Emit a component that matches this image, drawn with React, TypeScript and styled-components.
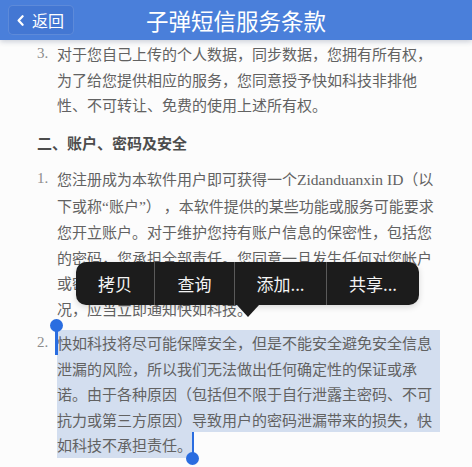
import React from "react";
import styled, { createGlobalStyle } from "styled-components";

const GlobalStyle = createGlobalStyle`
  html, body {
    margin: 0;
    padding: 0;
    background: #fcfcfc;
  }
  body {
    font-family: "Noto Sans CJK SC", "Noto Sans", sans-serif;
  }
`;

const Page = styled.div`
  position: relative;
  width: 472px;
  height: 467px;
  overflow: hidden;
  background: #fcfcfc;
`;

const Header = styled.header`
  position: relative;
  z-index: 3;
  height: 40px;
  padding: 0 8px;
  display: grid;
  grid-template-columns: 1fr auto 1fr;
  align-items: center;
  background: #4a7fda;
  box-shadow: 0 2px 5px rgba(40, 60, 100, 0.22);
`;

const BackButton = styled.button`
  justify-self: start;
  height: 30px;
  padding: 0 9px 0 8px;
  display: flex;
  align-items: center;
  gap: 8px;
  border: 1px solid rgba(255, 255, 255, 0.14);
  border-radius: 5px;
  background: #4377d3;
  color: #fff;
  font-family: inherit;
  font-size: 16px;
  line-height: 1;
  cursor: pointer;
`;

const Title = styled.h1`
  margin: 0;
  color: #fff;
  font-size: 22.5px;
  font-weight: 400;
  line-height: 40px;
  white-space: nowrap;
`;

const Content = styled.main`
  padding: 1px 32px 0 37px;
`;

const Item = styled.section`
  display: grid;
  grid-template-columns: 20px 1fr;
  & + & {
    margin-top: 9px;
  }
`;

const Num = styled.span`
  font-family: "Liberation Serif", serif;
  font-size: 15px;
  line-height: 25.5px;
  color: #8c8c8c;
`;

const Lines = styled.div`
  display: flex;
  flex-direction: column;
  align-items: stretch;
`;

const Line = styled.span<{ $selected?: boolean; $fit?: boolean }>`
  position: relative;
  display: block;
  align-self: ${(p) => (p.$fit ? "flex-start" : "stretch")};
  white-space: nowrap;
  font-size: 15px;
  line-height: 25.5px;
  color: #626262;
  background: ${(p) => (p.$selected ? "#d3deef" : "transparent")};
`;

const Latin = styled.span`
  font-family: "Liberation Serif", serif;
  font-size: 15.5px;
`;

const Heading = styled.h2`
  margin: 12px 0 11px;
  font-size: 15px;
  font-weight: 600;
  line-height: 25.5px;
  color: #4c4c4c;
  white-space: nowrap;
`;

/* Selection handles: a thin caret with a round knob */
const Handle = styled.span<{ $end?: boolean }>`
  position: absolute;
  top: 0;
  ${(p) => (p.$end ? "right: -2px;" : "left: -2px;")}
  width: 2.5px;
  height: ${(p) => (p.$end ? "24px" : "25px")};
  background: #2a6de0;
  &::after {
    content: "";
    position: absolute;
    left: -5.5px;
    ${(p) => (p.$end ? "bottom: -9px;" : "top: -11px;")}
    width: 13px;
    height: 13px;
    border-radius: 50%;
    background: #2a6de0;
  }
`;

/* Edit menu floating over the text */
const Menu = styled.div`
  position: absolute;
  z-index: 4;
  top: 262px;
  left: 76px;
  display: flex;
  height: 43px;
  border-radius: 10px;
  background: #1c1c1c;
  box-shadow: 0 2px 6px rgba(0, 0, 0, 0.15);
  &::after {
    content: "";
    position: absolute;
    top: 43px;
    left: 161px;
    border-left: 11px solid transparent;
    border-right: 11px solid transparent;
    border-top: 12px solid #1c1c1c;
  }
`;

const MenuItem = styled.button<{ $w: number }>`
  width: ${(p) => p.$w}px;
  display: flex;
  align-items: center;
  justify-content: center;
  padding: 0;
  border: none;
  background: transparent;
  color: #f4f4f4;
  font-family: inherit;
  font-size: 17px;
  white-space: nowrap;
  & + & {
    border-left: 1px solid #5a5a5a;
  }
`;

const Chevron = () => (
  <svg width="7" height="11" viewBox="0 0 7 11" aria-hidden="true">
    <path d="M5.6 1.2 1.6 5.5l4 4.3" fill="none" stroke="#fff" strokeWidth="2.2" strokeLinecap="round" strokeLinejoin="round" />
  </svg>
);

const menuItems = [
  { label: "拷贝", w: 78 },
  { label: "查询", w: 80 },
  { label: "添加...", w: 92 },
  { label: "共享...", w: 93 },
];

export default function App() {
  return (
    <Page>
      <GlobalStyle />
      <Header>
        <BackButton>
          <Chevron />
          返回
        </BackButton>
        <Title>子弹短信服务条款</Title>
      </Header>

      <Content>
        <Item>
          <Num>3.</Num>
          <Lines>
            <Line>对于您自己上传的个人数据，同步数据，您拥有所有权，</Line>
            <Line>为了给您提供相应的服务，您同意授予快如科技非排他</Line>
            <Line>性、不可转让、免费的使用上述所有权。</Line>
          </Lines>
        </Item>

        <Heading>二、账户、密码及安全</Heading>

        <Item>
          <Num>1.</Num>
          <Lines>
            <Line>
              您注册成为本软件用户即可获得一个<Latin>Zidanduanxin ID</Latin>（以
            </Line>
            <Line>
              下或称<Latin>“</Latin>账户<Latin>”</Latin>）&thinsp;，本软件提供的某些功能或服务可能要求
            </Line>
            <Line>您开立账户。对于维护您持有账户信息的保密性，包括您</Line>
            <Line>的密码，您承担全部责任。您同意一旦发生任何对您帐户</Line>
            <Line>或密码的任何未经授权使用或其他安全漏洞的情</Line>
            <Line>况，应当立即通知快如科技。</Line>
          </Lines>
        </Item>

        <Item>
          <Num>2.</Num>
          <Lines>
            <Line $selected>
              <Handle />
              快如科技将尽可能保障安全，但是不能安全避免安全信息
            </Line>
            <Line $selected>泄漏的风险，所以我们无法做出任何确定性的保证或承</Line>
            <Line $selected>诺。由于各种原因（包括但不限于自行泄露主密码、不可</Line>
            <Line $selected>抗力或第三方原因）导致用户的密码泄漏带来的损失，快</Line>
            <Line $selected $fit>
              如科技不承担责任。
              <Handle $end />
            </Line>
          </Lines>
        </Item>
      </Content>

      <Menu>
        {menuItems.map((m) => (
          <MenuItem key={m.label} $w={m.w}>
            {m.label}
          </MenuItem>
        ))}
      </Menu>
    </Page>
  );
}
